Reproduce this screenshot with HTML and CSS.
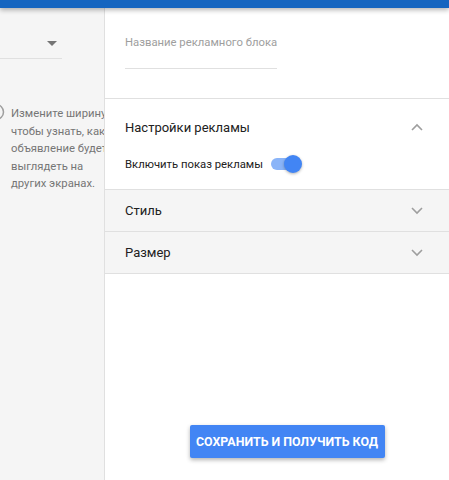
FILE: index.html
```html
<!DOCTYPE html>
<html lang="ru">
<head>
    <meta charset="UTF-8">
    <title>Рекламный блок</title>
    <link rel="stylesheet" href="styles.css">
</head>
<body>
    <div class="topbar"></div>
    <div class="workspace">
        <aside class="preview-side">
            <div class="device-select">
                <svg class="drop-arrow" width="10" height="5" viewBox="0 0 10 5"><path d="M0 0h10L5 5z" fill="#757575"/></svg>
            </div>
            <div class="hint">
                <svg class="hint-icon" width="18" height="18" viewBox="0 0 18 18"><circle cx="9" cy="9" r="7.5" fill="none" stroke="#9e9e9e" stroke-width="1.5"/></svg>
                <p>Измените ширину, чтобы узнать, как объявление будет выглядеть на других экранах.</p>
            </div>
        </aside>
        <main class="settings">
            <div class="name-field">
                <label>Название рекламного блока</label>
            </div>
            <section class="panel open">
                <div class="panel-head">
                    <span>Настройки рекламы</span>
                    <svg class="chevron" width="12" height="8" viewBox="0 0 12 8"><path d="M1 7l5-5 5 5" fill="none" stroke="#9e9e9e" stroke-width="1.6"/></svg>
                </div>
                <div class="toggle-row">
                    <span>Включить показ рекламы</span>
                    <span class="switch"><span class="knob"></span></span>
                </div>
            </section>
            <section class="panel closed">
                <div class="panel-head">
                    <span>Стиль</span>
                    <svg class="chevron" width="12" height="8" viewBox="0 0 12 8"><path d="M1 1l5 5 5-5" fill="none" stroke="#9e9e9e" stroke-width="1.6"/></svg>
                </div>
            </section>
            <section class="panel closed">
                <div class="panel-head">
                    <span>Размер</span>
                    <svg class="chevron" width="12" height="8" viewBox="0 0 12 8"><path d="M1 1l5 5 5-5" fill="none" stroke="#9e9e9e" stroke-width="1.6"/></svg>
                </div>
            </section>
            <div class="actions">
                <button class="save-btn">Сохранить и получить код</button>
            </div>
        </main>
    </div>
</body>
</html>
```

FILE: styles.css
```css
body {
    margin: 0;
    font-family: Roboto, 'Liberation Sans', sans-serif;
    color: #212121;
    background-color: #ffffff;
    overflow: hidden;
}
.topbar {
    height: 8px;
    background-color: #1565c0;
    box-shadow: 0 2px 5px rgba(0, 0, 0, 0.3);
    position: relative;
    z-index: 2;
}
.workspace {
    display: flex;
    height: 472px;
}
.preview-side {
    width: 104px;
    flex-shrink: 0;
    background-color: #f5f5f5;
    border-right: 1px solid #e0e0e0;
    overflow: hidden;
}
.device-select {
    width: 62px;
    height: 31px;
    margin-top: 20px;
    border-bottom: 1px solid #e0e0e0;
    display: flex;
    justify-content: flex-end;
    align-items: center;
    box-sizing: border-box;
    padding-right: 5px;
}
.hint {
    display: flex;
    align-items: flex-start;
    margin-top: 46px;
    margin-left: -13px;
    gap: 6px;
}
.hint-icon {
    flex-shrink: 0;
    margin-top: -2px;
}
.hint p {
    margin: 0;
    width: 100px;
    flex-shrink: 0;
    font-size: 11.3px;
    line-height: 17.5px;
    color: #757575;
}
.settings {
    flex: 1;
    display: flex;
    flex-direction: column;
    min-width: 0;
}
.name-field {
    height: 90px;
    border-bottom: 1px solid #e0e0e0;
    padding: 0 20px;
}
.name-field label {
    display: block;
    width: 152px;
    padding-top: 28px;
    padding-bottom: 19px;
    font-size: 11.3px;
    white-space: nowrap;
    color: #9e9e9e;
    border-bottom: 1px solid #e0e0e0;
}
.panel {
    border-bottom: 1px solid #e0e0e0;
    padding: 0 26px 0 20px;
}
.panel.closed {
    background-color: #f5f5f5;
}
.panel-head {
    display: flex;
    justify-content: space-between;
    align-items: center;
    height: 41px;
    font-size: 13px;
}
.panel.open .panel-head {
    height: 56px;
}
.toggle-row {
    display: flex;
    align-items: center;
    gap: 8px;
    height: 18px;
    padding-bottom: 16px;
    font-size: 11.3px;
}
.switch {
    position: relative;
    width: 28px;
    height: 12px;
    border-radius: 6px;
    background-color: #8ab4f8;
}
.knob {
    position: absolute;
    right: -3px;
    top: -3px;
    width: 18px;
    height: 18px;
    border-radius: 50%;
    background-color: #4285f4;
    box-shadow: 0 1px 3px rgba(0, 0, 0, 0.3);
}
.actions {
    margin-top: auto;
    padding: 0 0 22px 20px;
    display: flex;
    justify-content: center;
}
.save-btn {
    width: 195px;
    height: 33px;
    border: none;
    border-radius: 2px;
    background-color: #4285f4;
    color: #ffffff;
    font-family: Roboto, 'Liberation Sans', sans-serif;
    font-weight: bold;
    font-size: 12.4px;
    text-transform: uppercase;
    box-shadow: 0 2px 4px rgba(0, 0, 0, 0.3);
    padding: 0;
}
```
